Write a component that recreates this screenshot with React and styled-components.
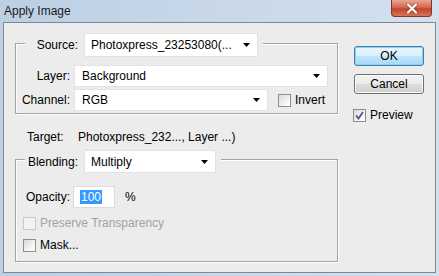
import styled, { createGlobalStyle } from 'styled-components';

const GlobalStyle = createGlobalStyle`
  html, body {
    margin: 0;
    padding: 0;
    background: #b9cbe0;
  }
  body {
    font-family: 'Liberation Sans', Arial, sans-serif;
    font-size: 12px;
    color: #000;
  }
`;

const Window = styled.div`
  width: 439px;
  height: 276px;
  display: flex;
  flex-direction: column;
  background: linear-gradient(90deg, #bccfe3 0%, #c9d9ea 55%, #d3e0ee 100%);
  box-sizing: border-box;
`;

const TitleBar = styled.div`
  height: 22px;
  flex: none;
  display: flex;
  justify-content: space-between;
  align-items: flex-start;
  padding-left: 4px;
`;

const Title = styled.span`
  line-height: 22px;
  font-size: 12px;
  color: #1b1b1b;
`;

const CloseButton = styled.div`
  width: 41px;
  height: 17px;
  margin-right: 7px;
  box-sizing: border-box;
  border: 1px solid #8a3224;
  border-top: none;
  border-radius: 0 0 4px 4px;
  background: linear-gradient(180deg, #e9a590 0%, #d66a52 45%, #c2442c 55%, #d57458 100%);
  display: flex;
  align-items: center;
  justify-content: center;
`;

const Body = styled.div`
  flex: 1;
  margin: 0 3px 3px 3px;
  border: 1px solid #7b8895;
  background: #ececec;
  display: flex;
  padding: 6px 11px 0 11px;
  gap: 16px;
`;

const LeftColumn = styled.div`
  width: 323px;
  display: flex;
  flex-direction: column;
`;

const Group = styled.fieldset`
  margin: 0;
  padding: 0 9px ${(p) => p.$bottom}px 0;
  border: 1px solid #a3a3a3;
  box-shadow: 1px 1px 0 #fff, inset 1px 1px 0 #fff;
  min-width: 0;
`;

const Legend = styled.legend`
  margin-left: 9px;
  padding: 4px 5px 0 0;
  background: #ececec;
`;

const LegendRow = styled.div`
  display: flex;
  align-items: center;
  gap: 6px;
`;

const LegendLabel = styled.span`
  width: 53px;
  text-align: right;
`;

const Rows = styled.div`
  display: flex;
  flex-direction: column;
  gap: ${(p) => p.$gap}px;
  margin-top: ${(p) => p.$top}px;
`;

const Row = styled.div`
  display: flex;
  align-items: center;
`;

const FieldLabel = styled.span`
  width: 54px;
  text-align: right;
  margin-right: ${(p) => p.$gap || 4}px;
`;

const Select = styled.div`
  width: ${(p) => p.$width}px;
  height: ${(p) => p.$height || 22}px;
  box-sizing: border-box;
  background: #fff;
  border: 1px solid #e2e2e2;
  display: flex;
  align-items: center;
  justify-content: space-between;
  padding: 0 7px 0 ${(p) => p.$pad || 6}px;
  white-space: nowrap;
`;

const CheckRow = styled.label`
  display: flex;
  align-items: center;
  gap: 4px;
  margin-left: ${(p) => p.$left || 0}px;
  margin-top: ${(p) => p.$top || 0}px;
  color: ${(p) => (p.$disabled ? '#a2a2a2' : '#000')};
`;

const Box = styled.span`
  width: 13px;
  height: 13px;
  box-sizing: border-box;
  border: 1px solid ${(p) => (p.$disabled ? '#c9c9c9' : '#8f8f8f')};
  background: ${(p) =>
    p.$disabled ? '#f3f3f3' : 'linear-gradient(135deg, #d9d9d9 0%, #f7f7f7 70%, #fff 100%)'};
  display: flex;
  align-items: center;
  justify-content: center;
`;

const TargetRow = styled.div`
  display: flex;
  padding-left: 12px;
  margin: 16px 0 2px;
  line-height: 14px;
`;

const TargetLabel = styled.span`
  width: 51px;
`;

const OpacityInput = styled.div`
  width: 42px;
  height: 22px;
  box-sizing: border-box;
  background: #fff;
  border: 1px solid #dcdcdc;
  display: flex;
  align-items: center;
  padding-left: 6px;
`;

const Selected = styled.span`
  background: #3399ff;
  color: #fff;
  line-height: 14px;
  padding: 0 1px;
`;

const Percent = styled.span`
  margin-left: 10px;
`;

const RightColumn = styled.div`
  width: 71px;
  display: flex;
  flex-direction: column;
  padding-top: 17px;
`;

const Button = styled.button`
  width: 70px;
  height: 20px;
  margin: 0 0 8px 0;
  padding: 0;
  box-sizing: border-box;
  border-radius: 3px;
  font-family: 'Liberation Sans', Arial, sans-serif;
  font-size: 12px;
  color: #000;
  border: 1px solid ${(p) => (p.$primary ? '#3c7fb1' : '#707070')};
  background: ${(p) =>
    p.$primary
      ? 'linear-gradient(180deg, #eaf6fd 0%, #d9f0fc 50%, #bee6fd 51%, #a7d9f5 100%)'
      : 'linear-gradient(180deg, #f2f2f2 0%, #ebebeb 50%, #dddddd 51%, #cfcfcf 100%)'};
  box-shadow: inset 0 0 0 1px ${(p) => (p.$primary ? '#94cfee' : '#fbfbfb')};
`;

const Arrow = () => (
  <svg width="7" height="4" viewBox="0 0 7 4">
    <polygon points="0,0 7,0 3.5,4" fill="#000" />
  </svg>
);

const Check = ({ checked, disabled, children, left, top }) => (
  <CheckRow $disabled={disabled} $left={left} $top={top}>
    <Box $disabled={disabled}>
      {checked && (
        <svg width="9" height="9" viewBox="0 0 9 9">
          <path d="M1 4.5 L3.5 7.5 L8 1" fill="none" stroke="#4a5a8f" strokeWidth="1.8" />
        </svg>
      )}
    </Box>
    {children}
  </CheckRow>
);

export default function App() {
  return (
    <>
      <GlobalStyle />
      <Window>
        <TitleBar>
          <Title>Apply Image</Title>
          <CloseButton>
            <svg width="14" height="11" viewBox="0 0 14 11">
              <path d="M3 1.5 L11 9.5 M11 1.5 L3 9.5" stroke="#6a2418" strokeWidth="3.6" strokeLinecap="round" opacity="0.55" />
              <path d="M3 1.5 L11 9.5 M11 1.5 L3 9.5" stroke="#fff" strokeWidth="2.2" strokeLinecap="round" />
            </svg>
          </CloseButton>
        </TitleBar>
        <Body>
          <LeftColumn>
            <Group $bottom={2}>
              <Legend>
                <LegendRow>
                  <LegendLabel>Source:</LegendLabel>
                  <Select $width={174} $height={24}>
                    Photoxpress_23253080(...
                    <Arrow />
                  </Select>
                </LegendRow>
              </Legend>
              <Rows $top={8} $gap={2}>
                <Row>
                  <FieldLabel>Layer:</FieldLabel>
                  <Select $width={254} $pad={7}>
                    Background
                    <Arrow />
                  </Select>
                </Row>
                <Row>
                  <FieldLabel>Channel:</FieldLabel>
                  <Select $width={194} $pad={7}>
                    RGB
                    <Arrow />
                  </Select>
                  <Check left={10}>Invert</Check>
                </Row>
              </Rows>
            </Group>

            <TargetRow>
              <TargetLabel>Target:</TargetLabel>
              <span>Photoxpress_232..., Layer ...)</span>
            </TargetRow>

            <Group $bottom={9}>
              <Legend>
                <LegendRow>
                  <LegendLabel>Blending:</LegendLabel>
                  <Select $width={132} $height={23}>
                    Multiply
                    <Arrow />
                  </Select>
                </LegendRow>
              </Legend>
              <Rows $top={13} $gap={8}>
                <Row>
                  <FieldLabel $gap={3}>Opacity:</FieldLabel>
                  <OpacityInput>
                    <Selected>100</Selected>
                  </OpacityInput>
                  <Percent>%</Percent>
                </Row>
                <Check disabled left={7}>Preserve Transparency</Check>
                <Check left={7}>Mask...</Check>
              </Rows>
            </Group>
          </LeftColumn>

          <RightColumn>
            <Button $primary>OK</Button>
            <Button>Cancel</Button>
            <Check checked left={-1} top={6}>
              Preview
            </Check>
          </RightColumn>
        </Body>
      </Window>
    </>
  );
}
